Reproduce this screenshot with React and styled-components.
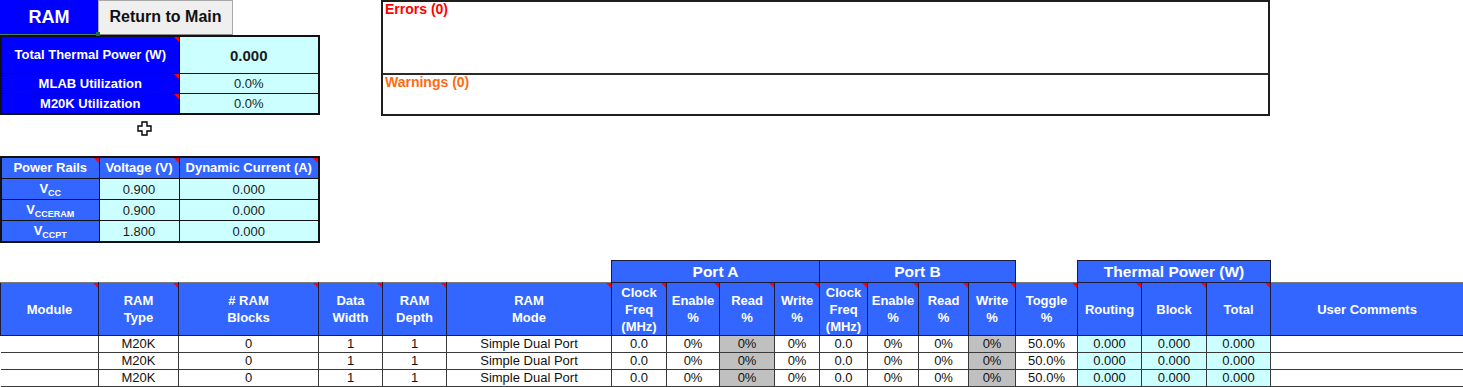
import React from 'react';
import styled, { createGlobalStyle, css } from 'styled-components';

const Global = createGlobalStyle`
  html, body { margin: 0; padding: 0; background: #ffffff; }
  body { font-family: "Liberation Sans", Arial, sans-serif; overflow: hidden; color: #111; }
`;

const Page = styled.div`
  position: relative;
  width: 1463px;
  height: 387px;
  overflow: hidden;
`;

const Top = styled.div`
  display: flex;
  align-items: flex-start;
  height: 260px;
`;

const LeftPanel = styled.div`
  width: 318px;
  display: flex;
  flex-direction: column;
`;

const TitleRow = styled.div`
  display: flex;
  height: 35px;
`;

const Title = styled.div`
  position: relative;
  width: 98px;
  box-sizing: border-box;
  background: #0000ff;
  color: #fff;
  font-weight: bold;
  font-size: 18px;
  display: flex;
  align-items: center;
  justify-content: center;
  border-bottom: 1px solid #4c7c70;
  &::after {
    content: '';
    position: absolute;
    right: -2px;
    bottom: -2px;
    width: 4px;
    height: 4px;
    background: #217346;
  }
`;

const ReturnButton = styled.button`
  width: 135px;
  height: 35px;
  box-sizing: border-box;
  margin: 0;
  padding: 0 0 2px;
  background: #efefef;
  border: 1px solid #a8a8a8;
  border-bottom-color: #8a8a8a;
  font-family: "Liberation Sans", Arial, sans-serif;
  font-weight: bold;
  font-size: 16px;
  color: #111;
`;

const Sheet = styled.table`
  border-collapse: collapse;
  table-layout: fixed;
  width: ${p => p.$w}px;
  margin-top: ${p => p.$mt || 0}px;
  border: ${p => (p.$frame ? '2px solid #111' : 'none')};
`;

const noteMark = css`
  &::after {
    content: '';
    position: absolute;
    top: 0;
    right: 0;
    border-top: 5px solid #ff0000;
    border-left: 5px solid transparent;
  }
`;

const Label = styled.td`
  position: relative;
  padding: 0;
  height: ${p => p.$h}px;
  background: ${p => p.$bg || '#0000ff'};
  color: #fff;
  font-weight: bold;
  font-size: 13px;
  line-height: 14px;
  text-align: center;
  border: 1px solid #111;
  white-space: nowrap;
  ${p => p.$note && noteMark}
`;

const Value = styled.td`
  padding: 0;
  background: #ccffff;
  color: #1a1a1a;
  font-size: ${p => p.$fs || 13}px;
  font-weight: ${p => (p.$bold ? 'bold' : 'normal')};
  text-align: center;
  border: 1px solid #111;
  line-height: 15px;
`;

const Sub = styled.sub`
  font-size: 9px;
  vertical-align: -3px;
  line-height: 0;
`;

const MessageBox = styled.div`
  margin-left: 63px;
  width: 889px;
  height: 116px;
  box-sizing: border-box;
  border: 2px solid #1e1e1e;
  display: flex;
  flex-direction: column;
`;

const MessageArea = styled.div`
  height: ${p => p.$h}px;
  flex: ${p => (p.$h ? 'none' : '1')};
  box-sizing: border-box;
  padding: 0 0 0 2px;
  border-bottom: ${p => (p.$divider ? '2px solid #2a2a2a' : 'none')};
  color: ${p => p.$color};
  font-weight: bold;
  font-size: 14px;
  line-height: 14px;
`;

const HeadCell = styled.th`
  position: relative;
  padding: 0;
  height: 52px;
  background: #3366ff;
  color: #fff;
  font-weight: bold;
  font-size: 13px;
  line-height: 17px;
  text-align: center;
  vertical-align: middle;
  border: 1px solid #1c1c3a;
  border-top: 1px solid #7a7a7a;
  white-space: nowrap;
  overflow: hidden;
  ${p => p.$note && noteMark}
`;

const GroupCell = styled.th`
  padding: 0;
  height: 21px;
  background: #3366ff;
  color: #fff;
  font-weight: bold;
  font-size: 15.5px;
  line-height: 18px;
  text-align: center;
  border: 1px solid #1c1c3a;
`;

const Blank = styled.th`
  padding: 0;
  border: none;
  background: transparent;
`;

const tones = { white: '#ffffff', cyan: '#ccffff', gray: '#c0c0c0' };

const DataCell = styled.td`
  padding: 0;
  height: 16px;
  background: ${p => tones[p.$tone || 'white']};
  color: #111;
  font-size: 13px;
  line-height: 14px;
  text-align: center;
  border: 1px solid #3a3a3a;
  border-left: ${p => (p.$first ? 'none' : '1px solid #3a3a3a')};
  white-space: nowrap;
  overflow: hidden;
`;

const Cursor = styled.svg`
  position: absolute;
  left: 137px;
  top: 121px;
`;

const cols = [98, 80, 140, 64, 64, 165, 55, 53, 55, 45, 48, 51, 50, 47, 62, 64, 65, 64, 193];

const headers = [
  ['Module'],
  ['RAM', 'Type'],
  ['# RAM', 'Blocks'],
  ['Data', 'Width'],
  ['RAM', 'Depth'],
  ['RAM', 'Mode'],
  ['Clock', 'Freq', '(MHz)'],
  ['Enable', '%'],
  ['Read', '%'],
  ['Write', '%'],
  ['Clock', 'Freq', '(MHz)'],
  ['Enable', '%'],
  ['Read', '%'],
  ['Write', '%'],
  ['Toggle', '%'],
  ['Routing'],
  ['Block'],
  ['Total'],
  ['User Comments'],
];

const row = [
  { v: '' },
  { v: 'M20K' },
  { v: '0' },
  { v: '1' },
  { v: '1' },
  { v: 'Simple Dual Port' },
  { v: '0.0' },
  { v: '0%' },
  { v: '0%', t: 'gray' },
  { v: '0%' },
  { v: '0.0' },
  { v: '0%' },
  { v: '0%' },
  { v: '0%', t: 'gray' },
  { v: '50.0%' },
  { v: '0.000', t: 'cyan' },
  { v: '0.000', t: 'cyan' },
  { v: '0.000', t: 'cyan' },
  { v: '' },
];

const rails = [
  { name: 'CC', v: '0.900', c: '0.000' },
  { name: 'CCERAM', v: '0.900', c: '0.000' },
  { name: 'CCPT', v: '1.800', c: '0.000' },
];

export default function App() {
  return (
    <Page>
      <Global />
      <Top>
        <LeftPanel>
          <TitleRow>
            <Title>RAM</Title>
            <ReturnButton>Return to Main</ReturnButton>
          </TitleRow>
          <Sheet $w={318} $frame>
            <colgroup>
              <col style={{ width: 178 }} />
              <col style={{ width: 140 }} />
            </colgroup>
            <tbody>
              <tr>
                <Label $h={36} $note>Total Thermal Power (W)</Label>
                <Value $bold $fs={15}>0.000</Value>
              </tr>
              <tr>
                <Label $h={19} $note>MLAB Utilization</Label>
                <Value>0.0%</Value>
              </tr>
              <tr>
                <Label $h={19} $note>M20K Utilization</Label>
                <Value>0.0%</Value>
              </tr>
            </tbody>
          </Sheet>
          <Sheet $w={318} $mt={41} $frame>
            <colgroup>
              <col style={{ width: 98 }} />
              <col style={{ width: 80 }} />
              <col style={{ width: 140 }} />
            </colgroup>
            <tbody>
              <tr>
                <Label $h={20} $bg="#3366ff" $note>Power Rails</Label>
                <Label $h={20} $bg="#3366ff" $note>Voltage (V)</Label>
                <Label $h={20} $bg="#3366ff" $note>Dynamic Current (A)</Label>
              </tr>
              {rails.map(r => (
                <tr key={r.name}>
                  <Label $h={20} $bg="#3366ff">
                    V<Sub>{r.name}</Sub>
                  </Label>
                  <Value>{r.v}</Value>
                  <Value>{r.c}</Value>
                </tr>
              ))}
            </tbody>
          </Sheet>
        </LeftPanel>
        <MessageBox>
          <MessageArea $h={73} $divider $color="#ff0000">Errors (0)</MessageArea>
          <MessageArea $color="#ff6a10">Warnings (0)</MessageArea>
        </MessageBox>
      </Top>

      <Sheet $w={1463}>
        <colgroup>
          {cols.map((w, i) => (
            <col key={i} style={{ width: w }} />
          ))}
        </colgroup>
        <thead>
          <tr>
            <Blank colSpan={6} />
            <GroupCell colSpan={4}>Port A</GroupCell>
            <GroupCell colSpan={4}>Port B</GroupCell>
            <Blank />
            <GroupCell colSpan={3}>Thermal Power (W)</GroupCell>
            <Blank />
          </tr>
          <tr>
            {headers.map((h, i) => (
              <HeadCell key={i} $note={i < 18}>
                {h.map((line, j) => (
                  <React.Fragment key={j}>
                    {j > 0 && <br />}
                    {line}
                  </React.Fragment>
                ))}
              </HeadCell>
            ))}
          </tr>
        </thead>
        <tbody>
          {[0, 1, 2].map(r => (
            <tr key={r}>
              {row.map((c, i) => (
                <DataCell key={i} $tone={c.t} $first={i === 0}>
                  {c.v}
                </DataCell>
              ))}
            </tr>
          ))}
        </tbody>
      </Sheet>

      <Cursor width="15" height="15" viewBox="0 0 15 15">
        <path
          d="M5 1 H10 V5 H14 V10 H10 V14 H5 V10 H1 V5 H5 Z"
          fill="#ffffff"
          stroke="#000000"
          strokeWidth="1.4"
        />
      </Cursor>
    </Page>
  );
}
